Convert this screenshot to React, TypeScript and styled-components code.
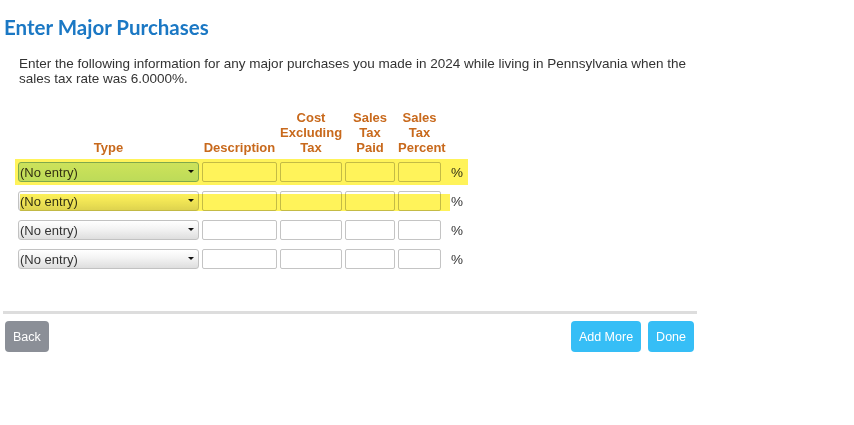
import React from 'react';
import styled, { createGlobalStyle } from 'styled-components';

const GlobalStyle = createGlobalStyle`
  body {
    margin: 0;
    background: #fff;
    font-family: "Liberation Sans", Arial, sans-serif;
    color: #333;
  }
`;

const Page = styled.div`
  width: 854px;
  padding-top: 14px;
`;

const Title = styled.h1`
  margin: 0 0 0 4px;
  font-family: Lato, "Open Sans", sans-serif;
  font-weight: 700;
  font-size: 20.5px;
  line-height: 26px;
  color: #1b78c4;
`;

const Intro = styled.p`
  margin: 16px 0 0 19px;
  width: 690px;
  font-size: 13.5px;
  line-height: 15px;
  color: #333;
`;

const Entries = styled.div`
  margin: 24px 0 0 15px;
  display: flex;
  flex-direction: column;
`;

const columns = '181px 75px 62px 50px 43px 24px';

const HeaderRow = styled.div`
  display: grid;
  grid-template-columns: ${columns};
  column-gap: 3px;
  align-items: end;
  padding-left: 3px;
  margin-bottom: 4px;
`;

const HeadCell = styled.div`
  font-size: 13px;
  font-weight: 700;
  line-height: 15px;
  color: #c8691c;
  text-align: center;
  white-space: nowrap;
`;

const RowList = styled.div`
  display: flex;
  flex-direction: column;
  gap: 3px;
`;

const Row = styled.div`
  position: relative;
  display: grid;
  grid-template-columns: ${columns};
  column-gap: 3px;
  align-items: center;
  padding: 3px 0 3px 3px;
  width: 450px;
`;

// highlighter mark laid over a row
const Highlight = styled.div<{ $left: number; $top: number; $width: number; $height: number }>`
  position: absolute;
  left: ${(p) => p.$left}px;
  top: ${(p) => p.$top}px;
  width: ${(p) => p.$width}px;
  height: ${(p) => p.$height}px;
  background: #fff35a;
  mix-blend-mode: multiply;
  pointer-events: none;
`;

const SelectWrap = styled.div`
  position: relative;
  height: 20px;
`;

const Select = styled.select<{ $focused?: boolean }>`
  appearance: none;
  width: 100%;
  height: 20px;
  box-sizing: border-box;
  margin: 0;
  padding: 0 0 0 1px;
  border: 1px solid ${(p) => (p.$focused ? '#7fb0d8' : '#c2c2c2')};
  border-radius: 3px;
  background: ${(p) =>
    p.$focused
      ? 'linear-gradient(#cdeeff, #bde6fb)'
      : 'linear-gradient(#ffffff 0%, #f3f3f3 45%, #dedede 100%)'};
  font-family: "Liberation Sans", Arial, sans-serif;
  font-size: 13px;
  color: #333;
  outline: none;
`;

const Caret = styled.span`
  position: absolute;
  right: 5px;
  top: 8px;
  width: 0;
  height: 0;
  border-left: 3px solid transparent;
  border-right: 3px solid transparent;
  border-top: 3px solid #111;
  pointer-events: none;
`;

const Field = styled.input`
  width: 100%;
  height: 20px;
  box-sizing: border-box;
  margin: 0;
  padding: 0 3px;
  border: 1px solid #c4c4c4;
  border-radius: 2px;
  background: #fff;
  font-family: "Liberation Sans", Arial, sans-serif;
  font-size: 12px;
`;

const Percent = styled.span`
  padding-left: 7px;
  font-size: 13.5px;
  color: #333;
`;

const Footer = styled.div`
  width: 691px;
  margin: 39px 0 0 3px;
  border-top: 3px solid #dddddd;
  padding: 7px 3px 0 0;
  display: flex;
  align-items: center;
`;

const Spacer = styled.div`
  flex: 1;
`;

const Button = styled.button<{ $kind: 'back' | 'primary' }>`
  height: 31px;
  padding: 0 8px;
  margin-left: ${(p) => (p.$kind === 'back' ? '2px' : '7px')};
  border: none;
  border-radius: 4px;
  background: ${(p) => (p.$kind === 'back' ? '#8b8f97' : '#36bef6')};
  color: #fff;
  font-family: "Liberation Sans", Arial, sans-serif;
  font-size: 12.5px;
  cursor: pointer;
`;

type Mark = { left: number; top: number; width: number; height: number };

const rows: { focused: boolean; mark?: Mark }[] = [
  { focused: true, mark: { left: 0, top: 0, width: 453, height: 26 } },
  { focused: false, mark: { left: 5, top: 6, width: 430, height: 17 } },
  { focused: false },
  { focused: false },
];

export default function App() {
  return (
    <>
      <GlobalStyle />
      <Page>
        <Title>Enter Major Purchases</Title>
        <Intro>
          Enter the following information for any major purchases you made in 2024 while living in
          Pennsylvania when the sales tax rate was 6.0000%.
        </Intro>
        <Entries>
          <HeaderRow>
            <HeadCell>Type</HeadCell>
            <HeadCell>Description</HeadCell>
            <HeadCell>Cost<br />Excluding<br />Tax</HeadCell>
            <HeadCell>Sales<br />Tax<br />Paid</HeadCell>
            <HeadCell>Sales<br />Tax<br />Percent</HeadCell>
            <div />
          </HeaderRow>
          <RowList>
            {rows.map((r, i) => (
              <Row key={i}>
                <SelectWrap>
                  <Select $focused={r.focused} defaultValue="">
                    <option value="">(No entry)</option>
                  </Select>
                  <Caret />
                </SelectWrap>
                <Field />
                <Field />
                <Field />
                <Field />
                <Percent>%</Percent>
                {r.mark && (
                  <Highlight
                    $left={r.mark.left}
                    $top={r.mark.top}
                    $width={r.mark.width}
                    $height={r.mark.height}
                  />
                )}
              </Row>
            ))}
          </RowList>
        </Entries>
        <Footer>
          <Button $kind="back">Back</Button>
          <Spacer />
          <Button $kind="primary">Add More</Button>
          <Button $kind="primary">Done</Button>
        </Footer>
      </Page>
    </>
  );
}
